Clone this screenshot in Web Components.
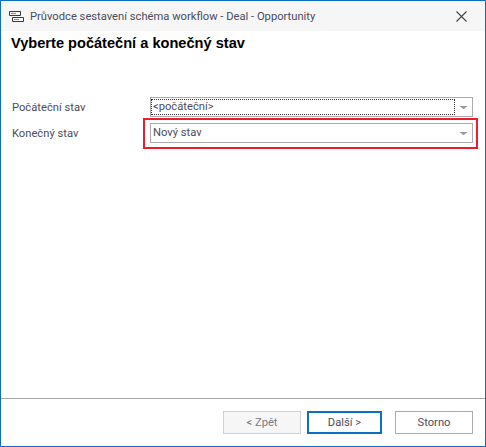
<!DOCTYPE html>
<html lang="cs">
<head>
<meta charset="utf-8">
<title>Průvodce</title>
<style>
html,body{margin:0;padding:0;background:#fff}
body{width:486px;height:447px;overflow:hidden;font-family:Roboto,"Liberation Sans",sans-serif}
</style>
</head>
<body>
<wizard-window>
  <title-bar slot="title">Průvodce sestavení schéma workflow - Deal - Opportunity</title-bar>
  <h-eading slot="heading">Vyberte počáteční a konečný stav</h-eading>
  <combo-row label="Počáteční stav" value="&lt;počáteční&gt;" focused></combo-row>
  <combo-row label="Konečný stav" value="Nový stav" marked></combo-row>
  <wiz-button slot="footer" disabled style="--w:78px">&lt; Zpět</wiz-button>
  <wiz-button slot="footer" primary style="--w:75px;--ml:6px">Další &gt;</wiz-button>
  <wiz-button slot="footer" style="--w:78px;--ml:13px">Storno</wiz-button>
</wizard-window>
<script>
function def(name, html){
  customElements.define(name, class extends HTMLElement{
    constructor(){super();this.attachShadow({mode:'open'}).innerHTML=html;}
  });
}
const UI='11.2px Roboto,"Liberation Sans",sans-serif';
def('wizard-window',`<style>
:host{display:flex;flex-direction:column;box-sizing:border-box;width:486px;height:447px;border:1px solid #0b6fc2;background:#fff}
.form{display:flex;flex-direction:column;gap:6px;padding:44px 12px 0 11px}
.grow{flex:1}
.foot{display:flex;justify-content:flex-start;border-top:1px solid #a6a6a6;height:48px;box-sizing:border-box;padding:12px 0 0 222px}
</style>
<slot name="title"></slot><slot name="heading"></slot>
<div class="form"><slot></slot></div><div class="grow"></div>
<div class="foot"><slot name="footer"></slot></div>`);
def('title-bar',`<style>
:host{display:flex;align-items:center;height:30px;background:#f6f6f6;color:#4c4c5c;font:${UI};flex:none}
svg{display:block}
.ic{margin:0 6px 0 8px}
.t{flex:1;white-space:nowrap}
.x{margin-right:18px}
</style>
<svg class="ic" width="15" height="13" viewBox="0 0 15 13" fill="none" stroke="#3c3c3c"><path d="M.5 1.500h11v4h-11zM3.500 7.500h11v4h-11z"/><path d="M2 3.500h5M5 9.500h5" stroke="#8a8a8a"/></svg>
<span class="t"><slot></slot></span>
<svg class="x" width="11" height="11" viewBox="0 0 11 11" fill="none" stroke="#444" stroke-width="1.100"><path d="M.5.5l10 10M10.500.5l-10 10"/></svg>`);
def('h-eading',`<style>
:host{display:block;flex:none;padding:2px 0 0 10px;height:20px;font:bold 14.6px/20px "Liberation Sans",Arial,sans-serif;color:#000;white-space:nowrap}
</style><slot></slot>`);
customElements.define('combo-row',class extends HTMLElement{
  constructor(){super();this.attachShadow({mode:'open'});}
  connectedCallback(){
    const f=this.hasAttribute('focused'),m=this.hasAttribute('marked');
    const esc=s=>s.replace(/&/g,'&amp;').replace(/</g,'&lt;');
    this.shadowRoot.innerHTML=`<style>
:host{display:flex;align-items:center;position:relative;height:20px;font:${UI};color:#4c4c5c}
.l{width:138px;flex:none;white-space:nowrap}
.c{flex:1;box-sizing:border-box;height:20px;border:1px solid #ababab;display:flex;align-items:stretch}
.v{flex:1;box-sizing:border-box;padding-left:2px;line-height:16px;white-space:nowrap;margin:1px 0;${f?'outline:1px dotted #333;outline-offset:-1px;':''}}
.a{width:17px;flex:none;display:flex;align-items:center;justify-content:center}
.mark{position:absolute;left:131px;top:-5px;width:335px;height:31px;box-sizing:border-box;border:2px solid #ed1c2e}
</style>
<span class="l">${esc(this.getAttribute('label'))}</span>
<div class="c"><div class="v">${esc(this.getAttribute('value'))}</div>
<div class="a"><svg width="7" height="3" viewBox="0 0 7 3" fill="#9a9a9a"><path d="M0 0h7v1H5.500v1h-1v1h-2V2h-1V1H0z"/></svg></div></div>
${m?'<div class="mark"></div>':''}`;
  }
});
customElements.define('wiz-button',class extends HTMLElement{
  constructor(){super();this.attachShadow({mode:'open'});}
  connectedCallback(){
    const d=this.hasAttribute('disabled'),p=this.hasAttribute('primary');
    this.shadowRoot.innerHTML=`<style>
:host{display:flex;align-items:center;justify-content:center;box-sizing:border-box;width:var(--w);margin-left:var(--ml,0);height:23px;font:${UI};
color:${d?'#7a7a82':'#4c4c5c'};background:${d?'#f6f6f6':'#fff'};border:${p?'2px solid #0b6fc2':d?'1px solid #d0d0d0':'1px solid #ababab'}}
</style><slot></slot>`;
  }
});
</script>
</body>
</html>
